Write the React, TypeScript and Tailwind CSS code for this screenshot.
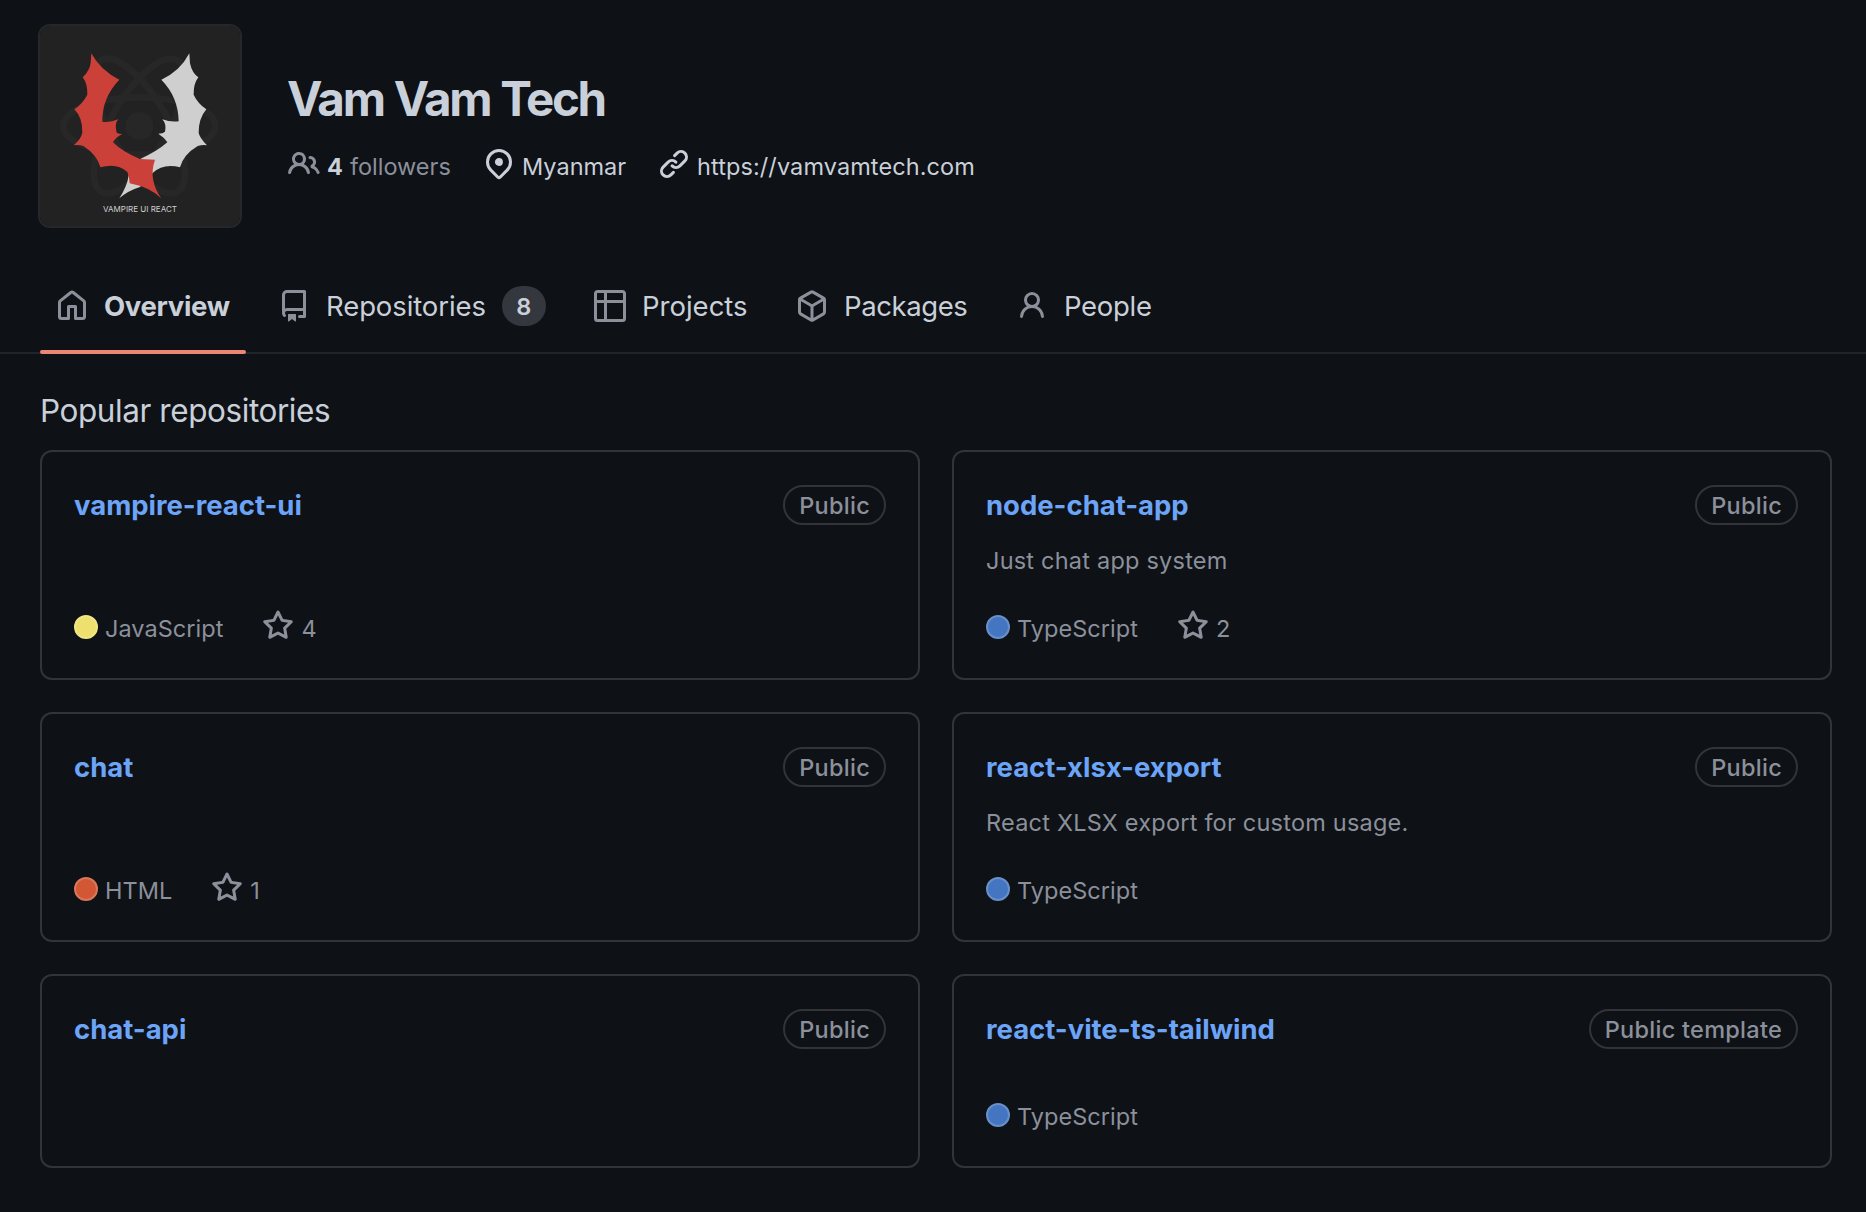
import React from "react";

const ICONS = {
  people:
    "M2 5.5a3.5 3.5 0 1 1 5.898 2.549 5.508 5.508 0 0 1 3.034 4.084.75.75 0 1 1-1.482.235 4 4 0 0 0-7.9 0 .75.75 0 0 1-1.482-.236A5.507 5.507 0 0 1 3.102 8.05 3.493 3.493 0 0 1 2 5.5ZM11 4a3.001 3.001 0 0 1 2.22 5.018 5.01 5.01 0 0 1 2.56 3.012.749.749 0 0 1-.885.954.752.752 0 0 1-.549-.514 3.507 3.507 0 0 0-2.522-2.372.75.75 0 0 1-.574-.73v-.352a.75.75 0 0 1 .416-.672A1.5 1.5 0 0 0 11 5.5.75.75 0 0 1 11 4Zm-5.5-.5a2 2 0 1 0-.001 3.999A2 2 0 0 0 5.5 3.5Z",
  location:
    "m12.596 11.596-3.535 3.536a1.5 1.5 0 0 1-2.122 0l-3.535-3.536a6.5 6.5 0 1 1 9.192-9.193 6.5 6.5 0 0 1 0 9.193Zm-1.06-8.132v-.001a5 5 0 1 0-7.072 7.072L8 14.07l3.536-3.534a5 5 0 0 0 0-7.072ZM8 9a2 2 0 1 1-.001-3.999A2 2 0 0 1 8 9Z",
  link:
    "m7.775 3.275 1.25-1.25a3.5 3.5 0 1 1 4.95 4.95l-2.5 2.5a3.5 3.5 0 0 1-4.95 0 .751.751 0 0 1 .018-1.042.751.751 0 0 1 1.042-.018 1.998 1.998 0 0 0 2.83 0l2.5-2.5a2.002 2.002 0 0 0-2.83-2.83l-1.25 1.25a.751.751 0 0 1-1.042-.018.751.751 0 0 1-.018-1.042Zm-4.69 9.64a1.998 1.998 0 0 0 2.83 0l1.25-1.25a.751.751 0 0 1 1.042.018.751.751 0 0 1 .018 1.042l-1.25 1.25a3.5 3.5 0 1 1-4.95-4.95l2.5-2.5a3.5 3.5 0 0 1 4.95 0 .751.751 0 0 1-.018 1.042.751.751 0 0 1-1.042.018 1.998 1.998 0 0 0-2.83 0l-2.5 2.5a1.998 1.998 0 0 0 0 2.83Z",
  home:
    "M6.906.664a1.749 1.749 0 0 1 2.187 0l5.25 4.2c.415.332.657.835.657 1.367v7.019A1.75 1.75 0 0 1 13.25 15h-3.5a.75.75 0 0 1-.75-.75V9H7v5.25a.75.75 0 0 1-.75.75h-3.5A1.75 1.75 0 0 1 1 13.25V6.23c0-.531.242-1.034.657-1.366l5.25-4.2Zm1.25 1.171a.25.25 0 0 0-.312 0l-5.25 4.2a.25.25 0 0 0-.094.196v7.019c0 .138.112.25.25.25H5.5V8.25a.75.75 0 0 1 .75-.75h3.5a.75.75 0 0 1 .75.75v5.25h2.75a.25.25 0 0 0 .25-.25V6.23a.25.25 0 0 0-.094-.195Z",
  repo:
    "M2 2.5A2.5 2.5 0 0 1 4.5 0h8.75a.75.75 0 0 1 .75.75v12.5a.75.75 0 0 1-.75.75h-2.5a.75.75 0 0 1 0-1.5h1.75v-2h-8a1 1 0 0 0-.714 1.7.75.75 0 1 1-1.072 1.05A2.495 2.495 0 0 1 2 11.5Zm10.5-1h-8a1 1 0 0 0-1 1v6.708A2.486 2.486 0 0 1 4.5 9h8ZM5 12.25a.25.25 0 0 1 .25-.25h3.5a.25.25 0 0 1 .25.25v3.25a.25.25 0 0 1-.4.2l-1.45-1.087a.249.249 0 0 0-.3 0L5.4 15.7a.25.25 0 0 1-.4-.2Z",
  table:
    "M0 1.75C0 .784.784 0 1.75 0h12.5C15.216 0 16 .784 16 1.75v12.5A1.75 1.75 0 0 1 14.25 16H1.75A1.75 1.75 0 0 1 0 14.25ZM6.5 6.5v8h7.75a.25.25 0 0 0 .25-.25V6.5Zm8-1.5V1.75a.25.25 0 0 0-.25-.25H6.5V5Zm-13 1.5v7.75c0 .138.112.25.25.25H5v-8ZM5 5V1.5H1.75a.25.25 0 0 0-.25.25V5Z",
  package:
    "m8.878.392 5.25 3.045c.54.314.872.89.872 1.514v6.098a1.75 1.75 0 0 1-.872 1.514l-5.25 3.045a1.75 1.75 0 0 1-1.756 0l-5.25-3.045A1.75 1.75 0 0 1 1 11.049V4.951c0-.624.332-1.201.872-1.514L7.122.392a1.75 1.75 0 0 1 1.756 0ZM7.875 1.69l-4.63 2.685L8 7.133l4.755-2.758-4.63-2.685a.248.248 0 0 0-.25 0ZM2.5 5.677v5.372c0 .09.047.171.125.216l4.625 2.683V8.432Zm6.25 8.271 4.625-2.683a.25.25 0 0 0 .125-.216V5.677L8.75 8.432Z",
  person:
    "M10.561 8.073a6.005 6.005 0 0 1 3.432 5.142.75.75 0 1 1-1.498.07 4.5 4.5 0 0 0-8.99 0 .75.75 0 0 1-1.498-.07 6.004 6.004 0 0 1 3.431-5.142 3.999 3.999 0 1 1 5.123 0ZM10.5 5a2.5 2.5 0 1 0-5 0 2.5 2.5 0 0 0 5 0Z",
  star:
    "M8 .25a.75.75 0 0 1 .673.418l1.882 3.815 4.21.612a.75.75 0 0 1 .416 1.279l-3.046 2.97.719 4.192a.751.751 0 0 1-1.088.791L8 12.347l-3.766 1.98a.75.75 0 0 1-1.088-.79l.72-4.194L.818 6.374a.75.75 0 0 1 .416-1.28l4.21-.611L7.327.668A.75.75 0 0 1 8 .25Zm0 2.445L6.615 5.5a.75.75 0 0 1-.564.41l-3.097.45 2.24 2.184a.75.75 0 0 1 .216.664l-.528 3.084 2.769-1.456a.75.75 0 0 1 .698 0l2.77 1.456-.53-3.084a.75.75 0 0 1 .216-.664l2.24-2.183-3.096-.45a.75.75 0 0 1-.564-.41L8 2.694Z",
};

function Icon({ name, className = "" }: { name: keyof typeof ICONS; className?: string }) {
  return (
    <svg viewBox="0 0 16 16" className={`size-8 shrink-0 fill-current ${className}`} aria-hidden="true">
      <path d={ICONS[name]} />
    </svg>
  );
}

function Logo() {
  return (
    <svg viewBox="30 30 600 600" className="block size-full" aria-label="Vampire UI React">
      <rect x="20" y="20" width="620" height="620" fill="#222222" />
      <g fill="none" stroke="#272727" strokeWidth="20">
        <ellipse cx="328" cy="330" rx="228" ry="86" />
        <ellipse cx="328" cy="330" rx="228" ry="86" transform="rotate(60 328 330)" />
        <ellipse cx="328" cy="330" rx="228" ry="86" transform="rotate(120 328 330)" />
      </g>
      <circle cx="328" cy="330" r="42" fill="#272727" />
      <path
        fill="#cfcfcf"
        d="M478 112Q450 166 394 191Q445 243 446 316Q420 319 397 310Q410 324 405 347Q399 353 385 353Q403 364 412 379Q380 407 332 428L296 478Q292 510 268 547Q294 524 330 513L368 471Q400 441 450 454Q460 416 503 390Q517 386 531 388Q508 364 506 350Q506 307 529 280Q503 262 491 236Q490 204 505 184Q486 171 480 142Z"
      />
      <path
        fill="#cb4038"
        d="M184 112Q212 164 268 191Q216 245 217 317Q240 320 265 310Q253 322 260 350Q267 354 277 354Q258 363 249 379Q278 408 330 429L375 431Q354 491 394 547Q360 514 299 502Q297 480 292 468Q260 439 211 454Q202 417 160 390Q145 385 131 388Q153 369 157 350Q158 305 133 280Q158 263 172 236Q173 203 158 184Q179 164 182 140Z"
      />
      <text x="219" y="587" fill="#cfcfcf" fontSize="24" textLength="222" lengthAdjust="spacingAndGlyphs">
        VAMPIRE UI REACT
      </text>
    </svg>
  );
}

type Tab = { icon: keyof typeof ICONS; label: string; text: string; item: string; count?: number };

const TABS: Tab[] = [
  { icon: "home", label: "Overview", text: "font-[650] tracking-[-0.35px]", item: "w-[206px]" },
  { icon: "repo", label: "Repositories", text: "tracking-[-0.1px]", item: "w-[316px]", count: 8 },
  { icon: "table", label: "Projects", text: "", item: "w-[202px]" },
  { icon: "package", label: "Packages", text: "tracking-[-0.4px]", item: "w-[220px]" },
  { icon: "person", label: "People", text: "tracking-[-0.3px]", item: "w-[168px]" },
];

type Repo = {
  name: string;
  badge?: string;
  description?: string;
  language?: string;
  dot?: string;
  stars?: number;
};

const TS_DOT = "bg-[#4475c0] border-[#6790cb]";

const REPOS: Repo[] = [
  { name: "vampire-react-ui", language: "JavaScript", dot: "bg-[#eee06f] border-[#f0e684]", stars: 4 },
  { name: "node-chat-app", description: "Just chat app system", language: "TypeScript", dot: TS_DOT, stars: 2 },
  { name: "chat", language: "HTML", dot: "bg-[#d25735] border-[#da7659]", stars: 1 },
  { name: "react-xlsx-export", description: "React XLSX export for custom usage.", language: "TypeScript", dot: TS_DOT },
  { name: "chat-api" },
  { name: "react-vite-ts-tailwind", badge: "Public template", language: "TypeScript", dot: TS_DOT },
];

function RepoCard({ repo }: { repo: Repo }) {
  return (
    <article className="flex flex-col rounded-xl border-2 border-[#323439] px-8 pt-[33px] pb-[31px]">
      <div className="flex h-10 items-center justify-between">
        <a className="text-[27.5px] leading-10 font-[650] tracking-[-0.02px] text-[#6ca4f8]">{repo.name}</a>
        <span className="flex h-10 items-center rounded-full border-2 border-[#323439] px-3.5 pt-px text-[23.5px] font-[550] tracking-[0.27px] text-[#8b909a]">
          {repo.badge ?? "Public"}
        </span>
      </div>
      {repo.description && <p className="mt-[18px] text-[23.5px] leading-9 tracking-[0.22px]">{repo.description}</p>}
      {repo.language && (
        <div className="mt-auto flex h-9 items-center">
          <span className={`mr-[7px] mb-1 size-6 rounded-full border-2 ${repo.dot}`} />
          <span className="text-[23.5px] leading-9 tracking-[0.04px]">{repo.language}</span>
          {repo.stars && (
            <span className="ml-[39px] flex items-center gap-[7px] text-[23.5px] leading-9">
              <Icon name="star" className="mb-1.5" />
              {repo.stars}
            </span>
          )}
        </div>
      )}
    </article>
  );
}

export default function App() {
  return (
    <div className="h-[1212px] w-[1866px] overflow-hidden bg-[#0e1116] font-[Inter,'Liberation_Sans',sans-serif] text-[#8b909a]">
      <header className="flex pt-6 pl-[38px]">
        <div className="size-[204px] overflow-hidden rounded-xl border-2 border-[#26272c]">
          <Logo />
        </div>
        <div className="ml-[45px] pt-[45px]">
          <h1 className="text-[47.5px] leading-[60px] font-[650] tracking-[-2.3px] text-[#c9d0d9] [word-spacing:1px]">
            Vam Vam Tech
          </h1>
          <div className="mt-[19px] ml-px flex h-9 items-center text-[23.5px] leading-9">
            <div className="flex w-[195px] items-center">
              <Icon name="people" className="mb-1" />
              <span className="ml-[7px] pt-0.5 font-bold text-[#c9d0d9]">4</span>
              <span className="ml-[7px] pt-0.5">followers</span>
            </div>
            <div className="flex w-[175px] items-center text-[#c9d0d9]">
              <Icon name="location" className="mb-1" />
              <span className="ml-[7px] pt-0.5">Myanmar</span>
            </div>
            <div className="flex items-center text-[#c9d0d9]">
              <Icon name="link" className="mb-1" />
              <span className="ml-[7px] pt-0.5 tracking-[0.09px]">https://vamvamtech.com</span>
            </div>
          </div>
        </div>
      </header>

      <nav className="mt-[34px] flex h-[92px] border-b-2 border-[#212429] pl-10">
        {TABS.map((tab, i) => (
          <a
            key={tab.label}
            className={`relative flex h-[92px] shrink-0 items-center pb-1 pl-4 ${tab.item} ${i === 0 ? "mr-4" : ""}`}
          >
            <Icon name={tab.icon} />
            <span className={`ml-4 text-[27.5px] leading-10 text-[#c9d0d9] ${tab.text}`}>{tab.label}</span>
            {tab.count && (
              <span className="ml-4 flex h-10 w-11 items-center justify-center rounded-full bg-[#34373e] pt-px text-[23.5px] font-[600] text-[#c9d0d9]">
                {tab.count}
              </span>
            )}
            {i === 0 && <span className="absolute inset-x-0 bottom-0 h-1 rounded-full bg-[#ec8670]" />}
          </a>
        ))}
      </nav>

      <main className="px-10 pr-[34px]">
        <h2 className="pt-[33px] text-[31.5px] leading-[48px] tracking-[-0.43px] text-[#c9d0d9]">Popular repositories</h2>
        <div className="mt-[15px] grid grid-cols-[880px_880px] grid-rows-[230px_230px_194px] gap-8">
          {REPOS.map((repo) => (
            <RepoCard key={repo.name} repo={repo} />
          ))}
        </div>
      </main>
    </div>
  );
}
